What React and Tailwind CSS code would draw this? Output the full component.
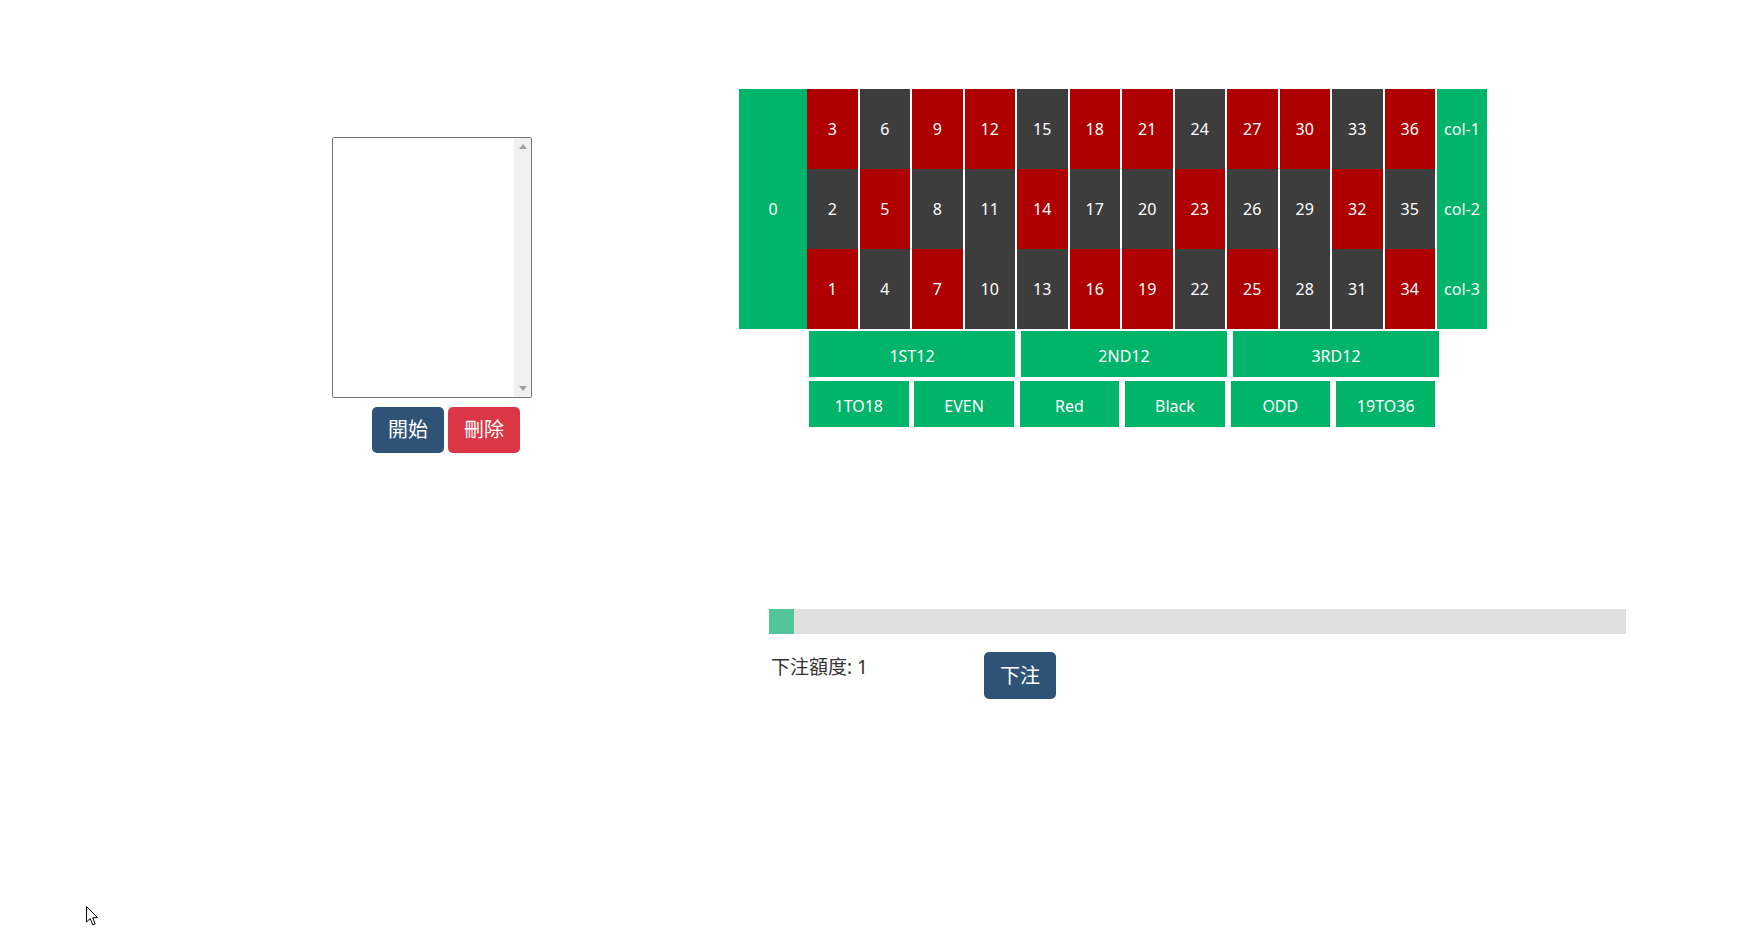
import React from 'react';

const RED = new Set([1, 3, 5, 7, 9, 12, 14, 16, 18, 19, 21, 23, 25, 27, 30, 32, 34, 36]);

const columns = Array.from({ length: 12 }, (_, i) => [3 * i + 3, 3 * i + 2, 3 * i + 1]);

const dozens = ['1ST12', '2ND12', '3RD12'];
const outside = ['1TO18', 'EVEN', 'Red', 'Black', 'ODD', '19TO36'];

const font = { fontFamily: '"Noto Sans", "Noto Sans CJK TC", sans-serif' };

const NumberCell = ({ n }) => (
  <div
    className={`h-[80px] flex items-center justify-center text-white text-[16px] ${
      RED.has(n) ? 'bg-[#ae0000]' : 'bg-[#3d3d3d]'
    }`}
  >
    {n}
  </div>
);

const RouletteTable = () => (
  <div className="flex">
    {/* zero */}
    <div className="w-[68px] h-[240px] bg-[#00b46a] text-white text-[16px] flex items-center justify-center">
      0
    </div>

    {/* numbers */}
    {columns.map((col) => (
      <div key={col[0]} className="w-[52.5px] flex flex-col border-r-2 border-white">
        {col.map((n) => (
          <NumberCell key={n} n={n} />
        ))}
      </div>
    ))}

    {/* column bets */}
    <div className="w-[50px] flex flex-col bg-[#00b46a]">
      {['col-1', 'col-2', 'col-3'].map((c) => (
        <div key={c} className="h-[80px] flex items-center justify-center text-white text-[16px]">
          {c}
        </div>
      ))}
    </div>
  </div>
);

// textarea with a classic (non-overlay) scrollbar look
const LogBox = () => (
  <div className="flex w-[200px] h-[261px] border border-[#767676] rounded-[2px] bg-white overflow-hidden">
    <textarea className="flex-1 min-w-0 h-full resize-none outline-none bg-white p-[2px] text-[13px]" defaultValue="" />
    <div className="w-[17px] h-full bg-[#f1f1f1] flex flex-col items-center justify-between py-[6px]">
      <svg width="8" height="5" viewBox="0 0 8 5">
        <path d="M0 5 L4 0 L8 5 Z" fill="#a3a3a3" />
      </svg>
      <svg width="8" height="5" viewBox="0 0 8 5">
        <path d="M0 0 L8 0 L4 5 Z" fill="#a3a3a3" />
      </svg>
    </div>
  </div>
);

const Cursor = () => (
  <svg className="absolute left-[86px] top-[906px]" width="14" height="21" viewBox="0 0 14 21">
    <path
      d="M0.5 0.5 L0.5 16 L4.2 12.6 L6.8 18.8 L9.2 17.8 L6.7 11.8 L11.6 11.6 Z"
      fill="white"
      stroke="black"
      strokeWidth="1"
      strokeLinejoin="round"
    />
  </svg>
);

export default function App() {
  return (
    <div className="relative w-full h-[937px] bg-white overflow-hidden" style={font}>
      <div className="flex">
        {/* left panel */}
        <div className="w-[739px] shrink-0 pt-[137px] pl-[332px]">
          <LogBox />
          <div className="flex gap-[4px] mt-[9px] ml-[40px]">
            <button className="w-[72px] h-[46px] rounded-[5px] bg-[#2f5376] text-white text-[20px] flex items-center justify-center">
              開始
            </button>
            <button className="w-[72px] h-[46px] rounded-[5px] bg-[#dc3545] text-white text-[20px] flex items-center justify-center">
              刪除
            </button>
          </div>
        </div>

        {/* right panel */}
        <div className="pt-[89px]">
          <RouletteTable />

          <div className="flex gap-[6px] mt-[2px] ml-[70px]">
            {dozens.map((d) => (
              <div
                key={d}
                className="w-[206px] h-[46px] pt-[3px] bg-[#00b46a] text-white text-[16px] flex items-center justify-center"
              >
                {d}
              </div>
            ))}
          </div>

          <div className="flex gap-[5.9px] mt-[4px] ml-[70px]">
            {outside.map((o) => (
              <div
                key={o}
                className="w-[99.5px] h-[46px] pt-[3px] bg-[#00b46a] text-white text-[16px] flex items-center justify-center"
              >
                {o}
              </div>
            ))}
          </div>

          {/* bet amount slider */}
          <div className="mt-[182px] ml-[30px] w-[857px] h-[25px] bg-[#e0e0e0] flex">
            <div className="w-[25px] h-full bg-[#52c59b]" />
          </div>

          <div className="flex items-start mt-[18px] ml-[32px]">
            <div className="w-[213px] pt-[1px] text-[19px] text-[#333]">下注額度: 1</div>
            <button className="w-[72px] h-[47px] rounded-[5px] bg-[#2f5376] text-white text-[20px] flex items-center justify-center">
              下注
            </button>
          </div>
        </div>
      </div>

      <Cursor />
    </div>
  );
}
